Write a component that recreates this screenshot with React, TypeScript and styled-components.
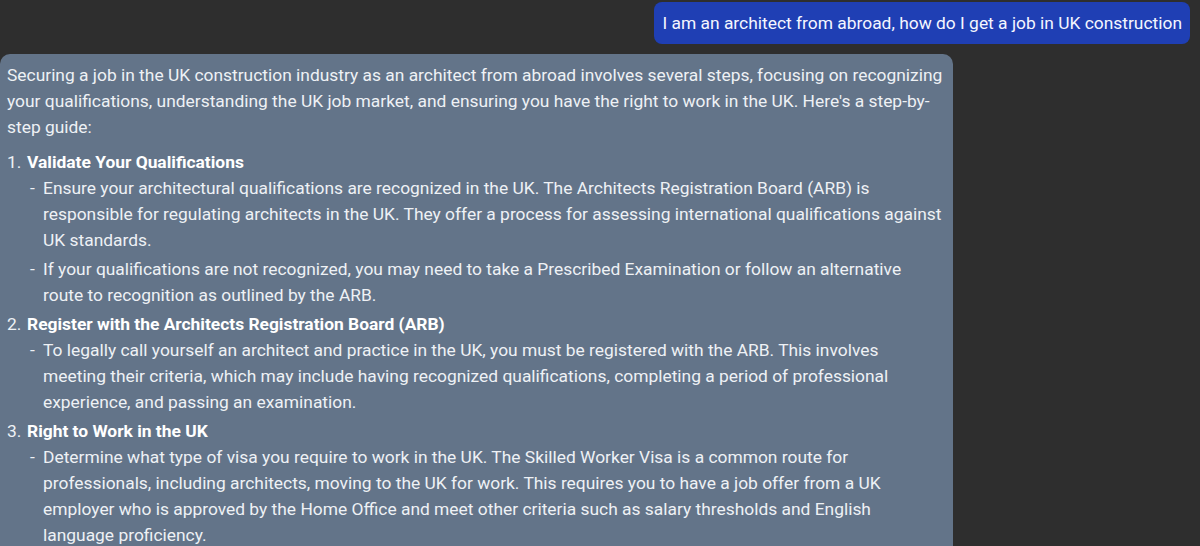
import React from "react";
import styled, { createGlobalStyle } from "styled-components";

const Global = createGlobalStyle`
  html, body { margin: 0; padding: 0; background: #2e2e2e; }
  body { font-family: Roboto, "Noto Sans", "Liberation Sans", sans-serif; }
  * { box-sizing: border-box; }
`;

const Thread = styled.div`
  display: flex;
  flex-direction: column;
  gap: 10px;
  padding-top: 2px;
  height: 546px;
  overflow: hidden;
`;

const UserRow = styled.div`
  display: flex;
  justify-content: flex-end;
  padding-right: 10px;
`;

const UserBubble = styled.div`
  background: #1f3fb4;
  color: #f4f6ff;
  font-size: 17.4px;
  line-height: 22px;
  padding: 10px 8px;
  border-radius: 8px;
`;

const BotRow = styled.div`
  display: flex;
  flex: 1;
`;

const BotBubble = styled.div`
  width: 953px;
  background: #637489;
  color: #eef1f5;
  font-size: 17.4px;
  line-height: 26px;
  padding: 8px 8px 20px 7px;
  border-radius: 10px 10px 0 0;
`;

const Para = styled.p`
  margin: 0 0 9px;
`;

const Steps = styled.ol`
  list-style: none;
  margin: 0;
  padding: 0;
`;

const Step = styled.li`
  & + & { margin-top: 3px; }
`;

const StepTitle = styled.div`
  display: flex;
`;

const Num = styled.span`
  width: 20px;
  flex: none;
`;

const Bold = styled.strong`
  font-weight: 700;
  color: #ffffff;
`;

const Subs = styled.ul`
  list-style: none;
  margin: 0;
  padding: 0 0 0 36px;
`;

const Sub = styled.li`
  position: relative;
  & + & { margin-top: 3px; }
  &::before {
    content: "-";
    position: absolute;
    left: -13px;
    top: 0;
  }
`;

const steps = [
  {
    title: "Validate Your Qualifications",
    subs: [
      "Ensure your architectural qualifications are recognized in the UK. The Architects Registration Board (ARB) is responsible for regulating architects in the UK. They offer a process for assessing international qualifications against UK standards.",
      "If your qualifications are not recognized, you may need to take a Prescribed Examination or follow an alternative route to recognition as outlined by the ARB.",
    ],
  },
  {
    title: "Register with the Architects Registration Board (ARB)",
    subs: [
      "To legally call yourself an architect and practice in the UK, you must be registered with the ARB. This involves meeting their criteria, which may include having recognized qualifications, completing a period of professional experience, and passing an examination.",
    ],
  },
  {
    title: "Right to Work in the UK",
    subs: [
      "Determine what type of visa you require to work in the UK. The Skilled Worker Visa is a common route for professionals, including architects, moving to the UK for work. This requires you to have a job offer from a UK employer who is approved by the Home Office and meet other criteria such as salary thresholds and English language proficiency.",
    ],
  },
];

export default function App() {
  return (
    <>
      <Global />
      <Thread>
        <UserRow>
          <UserBubble>I am an architect from abroad, how do I get a job in UK construction</UserBubble>
        </UserRow>
        <BotRow>
          <BotBubble>
            <Para>
              Securing a job in the UK construction industry as an architect from abroad involves several steps, focusing on recognizing your qualifications, understanding the UK job market, and ensuring you have the right to work in the UK. Here's a step-by-step guide:
            </Para>
            <Steps>
              {steps.map((s, i) => (
                <Step key={i}>
                  <StepTitle>
                    <Num>{i + 1}.</Num>
                    <Bold>{s.title}</Bold>
                  </StepTitle>
                  <Subs>
                    {s.subs.map((t, j) => (
                      <Sub key={j}>{t}</Sub>
                    ))}
                  </Subs>
                </Step>
              ))}
            </Steps>
          </BotBubble>
        </BotRow>
      </Thread>
    </>
  );
}
